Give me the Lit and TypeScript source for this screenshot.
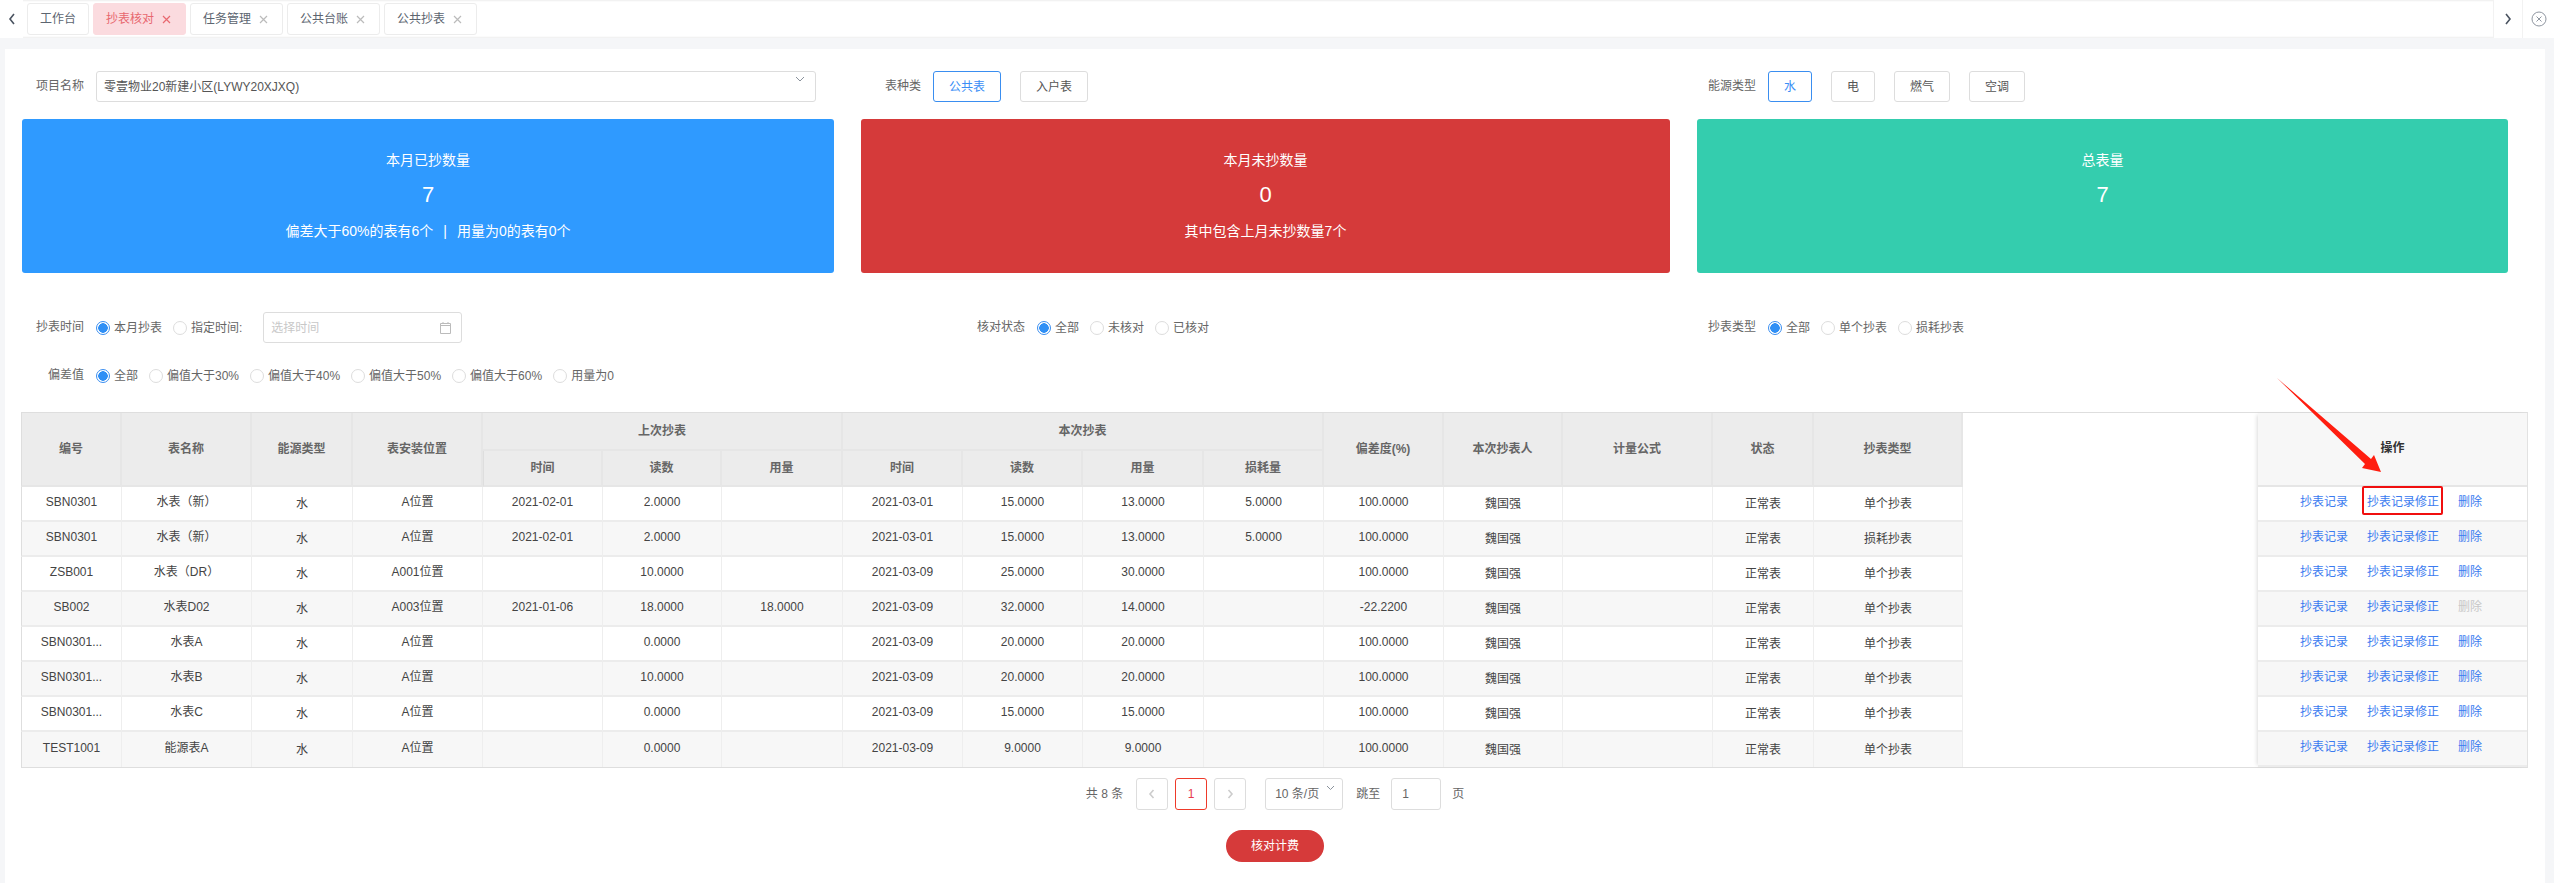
import { LitElement, html, css, svg } from "lit";
import { customElement } from "lit/decorators.js";

const COLS = [
  { w: 101 }, { w: 130 }, { w: 101, low: true }, { w: 130 },
  { w: 120 }, { w: 119 }, { w: 121 },
  { w: 120 }, { w: 120 }, { w: 121 }, { w: 120 },
  { w: 120 }, { w: 119, low: true }, { w: 150 }, { w: 101, low: true }, { w: 149, low: true },
];

const ROWS = [
  ["SBN0301", "水表（新）", "水", "A位置", "2021-02-01", "2.0000", "", "2021-03-01", "15.0000", "13.0000", "5.0000", "100.0000", "魏国强", "", "正常表", "单个抄表"],
  ["SBN0301", "水表（新）", "水", "A位置", "2021-02-01", "2.0000", "", "2021-03-01", "15.0000", "13.0000", "5.0000", "100.0000", "魏国强", "", "正常表", "损耗抄表"],
  ["ZSB001", "水表（DR）", "水", "A001位置", "", "10.0000", "", "2021-03-09", "25.0000", "30.0000", "", "100.0000", "魏国强", "", "正常表", "单个抄表"],
  ["SB002", "水表D02", "水", "A003位置", "2021-01-06", "18.0000", "18.0000", "2021-03-09", "32.0000", "14.0000", "", "-22.2200", "魏国强", "", "正常表", "单个抄表"],
  ["SBN0301...", "水表A", "水", "A位置", "", "0.0000", "", "2021-03-09", "20.0000", "20.0000", "", "100.0000", "魏国强", "", "正常表", "单个抄表"],
  ["SBN0301...", "水表B", "水", "A位置", "", "10.0000", "", "2021-03-09", "20.0000", "20.0000", "", "100.0000", "魏国强", "", "正常表", "单个抄表"],
  ["SBN0301...", "水表C", "水", "A位置", "", "0.0000", "", "2021-03-09", "15.0000", "15.0000", "", "100.0000", "魏国强", "", "正常表", "单个抄表"],
  ["TEST1001", "能源表A", "水", "A位置", "", "0.0000", "", "2021-03-09", "9.0000", "9.0000", "", "100.0000", "魏国强", "", "正常表", "单个抄表"],
];

const chevron = (d: string, cls = "") => svg`<svg class=${cls} width="10" height="14" viewBox="0 0 10 14" fill="none" stroke="currentColor" stroke-width="1.6"><path d=${d}/></svg>`;
const cross = svg`<svg width="9" height="9" viewBox="0 0 9 9" fill="none" stroke="currentColor" stroke-width="1.2"><path d="M1 1l7 7M8 1l-7 7"/></svg>`;

@customElement("app-root")
export class AppRoot extends LitElement {
  static styles = css`
    :host { display: block; position: relative; height: 883px; overflow: hidden; background: #f5f6f8;
      font: 12px/16px "Liberation Sans", "Noto Sans CJK SC", sans-serif; color: #666; }
    .tabbar { height: 38px; display: flex; background: #fff; box-shadow: inset 0 2px 2px -1px #eee, inset 0 -3px 2px -2px #eee; }
    .nav { width: 23px; display: flex; align-items: center; justify-content: center; background: #fff; color: #4a5360; flex: none; }
    .tabs { flex: 1; display: flex; gap: 4px; padding: 3px 4px; }
    .tab { height: 32px; box-sizing: border-box; border: 1px solid #ececec; border-radius: 3px; display: flex; align-items: center; gap: 8px; padding: 0 14px 0 12px; color: #5c6570; background: #fff; }
    .tab svg { color: #bbb; margin-top: 1px; }
    .tab.plain { padding: 0 12px; }
    .tab.on { background: #fbdbdf; border-color: #fbdbdf; color: #e8686f; }
    .tab.on svg { color: #e8686f; }
    .nav.r { width: 28px; border-left: 1px solid #f2f2f2; }
    .nav.x { width: 31px; border-left: 1px solid #f2f2f2; color: #8f96a0; }

    .page { margin: 11px 0 0 5px; width: 2540px; height: 834px; background: #fff; padding-top: 22px; box-sizing: border-box; }
    .grid3 { display: grid; grid-template-columns: 839px 835px 1fr; padding-left: 17px; }
    .field { display: flex; align-items: center; height: 31px; }
    .lab { text-align: right; margin-right: 12px; padding-bottom: 2px; color: #666; flex: none; }
    .l62 { width: 62px; } .l60 { width: 60px; } .l164 { width: 164px; }
    .select { width: 720px; height: 31px; box-sizing: border-box; border: 1px solid #ddd; border-radius: 3px; padding: 1px 7px 0; display: flex; align-items: center; justify-content: space-between; color: #555; position: relative; }
    .select svg { color: #8a929c; margin: -16px 3px 0 0; }
    .opts { display: flex; gap: 19px; }
    .btn { height: 31px; box-sizing: border-box; border: 1px solid #ddd; border-radius: 3px; padding: 0 15px; display: flex; align-items: center; color: #555; }
    .btn.on { border-color: #3a8ef0; color: #3a8ef6; }

    .cards { display: grid; grid-template-columns: 812px 809px 811px; gap: 27px; padding: 0 17px; margin-top: 17px; }
    .card { height: 154px; border-radius: 3px; color: #fff; display: flex; flex-direction: column; align-items: center; padding-top: 31px; box-sizing: border-box; font-size: 14px; line-height: 20px; }
    .card.blue { background: #2f9aff; } .card.red { background: #d53a3a; } .card.teal { background: #34cdae; }
    .num { font-size: 22px; line-height: 30px; margin-top: 10px; }
    .sub { margin-top: 11px; }
    .sep { margin: 0 10px; }

    .r1 { margin-top: 39px; }
    .r2 { margin-top: 17px; padding-left: 17px; }
    .radios { display: flex; align-items: center; gap: 11px; }
    .radio { display: flex; align-items: center; gap: 4px; color: #666; }
    .dot { width: 14px; height: 14px; box-sizing: border-box; border: 1px solid #ddd; border-radius: 50%; display: block; }
    .radio.on .dot { border-color: #3a8ef0; background: radial-gradient(circle, #2f8ff5 0 4.5px, #fff 5px); }
    .date { width: 199px; height: 31px; box-sizing: border-box; border: 1px solid #ddd; border-radius: 3px; margin-left: 21px; padding: 0 7px; display: flex; align-items: center; justify-content: space-between; color: #c8c8c8; }
    .date svg { color: #bbb; margin-right: 2px; }

    .tablewrap { margin: 21px 0 0 16px; width: 2507px; display: flex; justify-content: space-between; border-top: 1px solid #dedede; border-bottom: 1px solid #dedede; border-right: 1px solid #e2e2e2; box-sizing: border-box; }
    table { border-collapse: separate; border-spacing: 0; table-layout: fixed; }
    .main { width: 1941px; }
    .ops { width: 269px; box-shadow: -3px 0 4px -2px rgba(0,0,0,.14); }
    th, td { box-sizing: border-box; padding: 0; text-align: center; font-weight: 400; }
    th { background: #ececec; border-right: 2px solid #e6e6e6; border-bottom: 2px solid #e6e6e6; color: #666; font-weight: 700; }
    .main th:first-child, .main td:first-child { border-left: 1px solid #dedede; }
    .h1 { height: 38px; } .h2 { height: 36px; }
    td { height: 35px; border-right: 1px solid #eee; border-bottom: 2px solid #ececec; color: #444; padding-bottom: 4px; }
    td.low { padding-bottom: 0; }
    tr.even td { background: #f7f7f7; }
    .main tr:last-child td { border-bottom: 0; }
    .ops th { background: #f7f7f7; border-right: 0; color: #333; padding-bottom: 3px; }
    .ops td { border-right: 0; }
    .links { display: flex; justify-content: center; gap: 19px; padding-right: 3px; color: #3b7bf0; }
    .links .off { color: #c8c8c8; }
    .mark { position: relative; }
    .mark::after { content: ""; position: absolute; left: -5px; right: -4px; top: -8px; bottom: -5px; border: 2px solid #f00f0f; border-radius: 2px; }

    .pager { display: flex; justify-content: center; align-items: center; margin-top: 10px; height: 32px; color: #666; }
    .pg { width: 32px; height: 32px; box-sizing: border-box; border: 1px solid #ddd; border-radius: 3px; display: flex; align-items: center; justify-content: center; color: #ccc; }
    .pg.on { border-color: #ee3a2a; color: #e83a50; margin: 0 7px; }
    .ps { width: 78px; height: 32px; box-sizing: border-box; border: 1px solid #ddd; border-radius: 3px; margin: 0 13px 0 19px; padding: 0 9px; display: flex; align-items: center; justify-content: space-between; }
    .ps svg { color: #8a929c; margin: -12px -2px 0 0; }
    .pin { width: 50px; height: 32px; box-sizing: border-box; border: 1px solid #ddd; border-radius: 3px; margin: 0 11px; padding: 0 10px; display: flex; align-items: center; }
    .total { margin-right: 13px; }
    .action { display: flex; justify-content: center; margin-top: 20px; }
    .go { width: 98px; height: 32px; border-radius: 16px; background: #d63a3a; color: #fff; display: flex; align-items: center; justify-content: center; }
    .arrow { position: absolute; left: 0; top: 0; pointer-events: none; }
  `;

  private radios(items: string[]) {
    return html`<div class="radios">${items.map((t, i) => html`<span class="radio ${i === 0 ? "on" : ""}"><i class="dot"></i>${t}</span>`)}</div>`;
  }

  render() {
    const tabs = ["抄表核对", "任务管理", "公共台账", "公共抄表"];
    return html`
      <div class="tabbar">
        <div class="nav">${chevron("M7 2L3 7l4 5")}</div>
        <div class="tabs">
          <div class="tab plain">工作台</div>
          ${tabs.map((t, i) => html`<div class="tab ${i === 0 ? "on" : ""}">${t}${cross}</div>`)}
        </div>
        <div class="nav r">${chevron("M3 2l4 5-4 5")}</div>
        <div class="nav x"><svg width="16" height="16" viewBox="0 0 16 16" fill="none" stroke="currentColor"><circle cx="8" cy="8" r="7"/><path d="M5.5 5.5l5 5M10.5 5.5l-5 5"/></svg></div>
      </div>

      <div class="page">
        <div class="grid3">
          <div class="field"><span class="lab l62">项目名称</span>
            <div class="select">零壹物业20新建小区(LYWY20XJXQ)<svg width="10" height="6" viewBox="0 0 10 6" fill="none" stroke="currentColor"><path d="M1 1l4 4 4-4"/></svg></div>
          </div>
          <div class="field"><span class="lab l60">表种类</span>
            <div class="opts"><span class="btn on">公共表</span><span class="btn">入户表</span></div>
          </div>
          <div class="field"><span class="lab l60">能源类型</span>
            <div class="opts"><span class="btn on">水</span><span class="btn">电</span><span class="btn">燃气</span><span class="btn">空调</span></div>
          </div>
        </div>

        <div class="cards">
          <div class="card blue">本月已抄数量<div class="num">7</div>
            <div class="sub">偏差大于60%的表有6个<span class="sep">|</span>用量为0的表有0个</div></div>
          <div class="card red">本月未抄数量<div class="num">0</div><div class="sub">其中包含上月未抄数量7个</div></div>
          <div class="card teal">总表量<div class="num">7</div></div>
        </div>

        <div class="grid3 r1">
          <div class="field"><span class="lab l62">抄表时间</span>
            ${this.radios(["本月抄表", "指定时间:"])}
            <div class="date">选择时间<svg width="13" height="13" viewBox="0 0 13 13" fill="none" stroke="currentColor"><path d="M1.5 2.5h10v10h-10zM1.5 4.5h10M4 1v2M9 1v2"/></svg></div>
          </div>
          <div class="field"><span class="lab l164">核对状态</span>${this.radios(["全部", "未核对", "已核对"])}</div>
          <div class="field"><span class="lab l60">抄表类型</span>${this.radios(["全部", "单个抄表", "损耗抄表"])}</div>
        </div>
        <div class="field r2"><span class="lab l62">偏差值</span>
          ${this.radios(["全部", "偏值大于30%", "偏值大于40%", "偏值大于50%", "偏值大于60%", "用量为0"])}
        </div>

        <div class="tablewrap">
          <table class="main">
            <colgroup>${COLS.map((c) => html`<col style="width:${c.w}px" />`)}</colgroup>
            <thead>
              <tr class="h1">
                <th rowspan="2">编号</th><th rowspan="2">表名称</th><th rowspan="2">能源类型</th><th rowspan="2">表安装位置</th>
                <th colspan="3">上次抄表</th><th colspan="4">本次抄表</th>
                <th rowspan="2">偏差度(%)</th><th rowspan="2">本次抄表人</th><th rowspan="2">计量公式</th><th rowspan="2">状态</th><th rowspan="2">抄表类型</th>
              </tr>
              <tr class="h2">
                <th>时间</th><th>读数</th><th>用量</th><th>时间</th><th>读数</th><th>用量</th><th>损耗量</th>
              </tr>
            </thead>
            <tbody>
              ${ROWS.map((r, i) => html`<tr class=${i % 2 ? "even" : ""}>${r.map((v, j) => html`<td class=${COLS[j].low ? "low" : ""}>${v}</td>`)}</tr>`)}
            </tbody>
          </table>
          <table class="ops">
            <thead><tr><th style="height:74px">操作</th></tr></thead>
            <tbody>
              ${ROWS.map((_, i) => html`<tr class=${i % 2 ? "even" : ""}><td>
                <div class="links"><span>抄表记录</span><span class=${i === 0 ? "mark" : ""}>抄表记录修正</span><span class=${i === 3 ? "off" : ""}>删除</span></div>
              </td></tr>`)}
            </tbody>
          </table>
        </div>

        <div class="pager">
          <span class="total">共 8 条</span>
          <span class="pg">${chevron("M6.5 3L3 7l3.5 4")}</span>
          <span class="pg on">1</span>
          <span class="pg">${chevron("M3.5 3L7 7l-3.5 4")}</span>
          <span class="ps">10 条/页<svg width="9" height="6" viewBox="0 0 9 6" fill="none" stroke="currentColor"><path d="M1 1l3.5 3.5L8 1"/></svg></span>
          <span>跳至</span><span class="pin">1</span><span>页</span>
        </div>
        <div class="action"><div class="go">核对计费</div></div>
      </div>

      <svg class="arrow" width="2554" height="883" viewBox="0 0 2554 883"><path d="M2277 378L2371 459L2374 455L2381 472L2362 468L2365 464Z" fill="#ff1e10" /></svg>
    `;
  }
}
